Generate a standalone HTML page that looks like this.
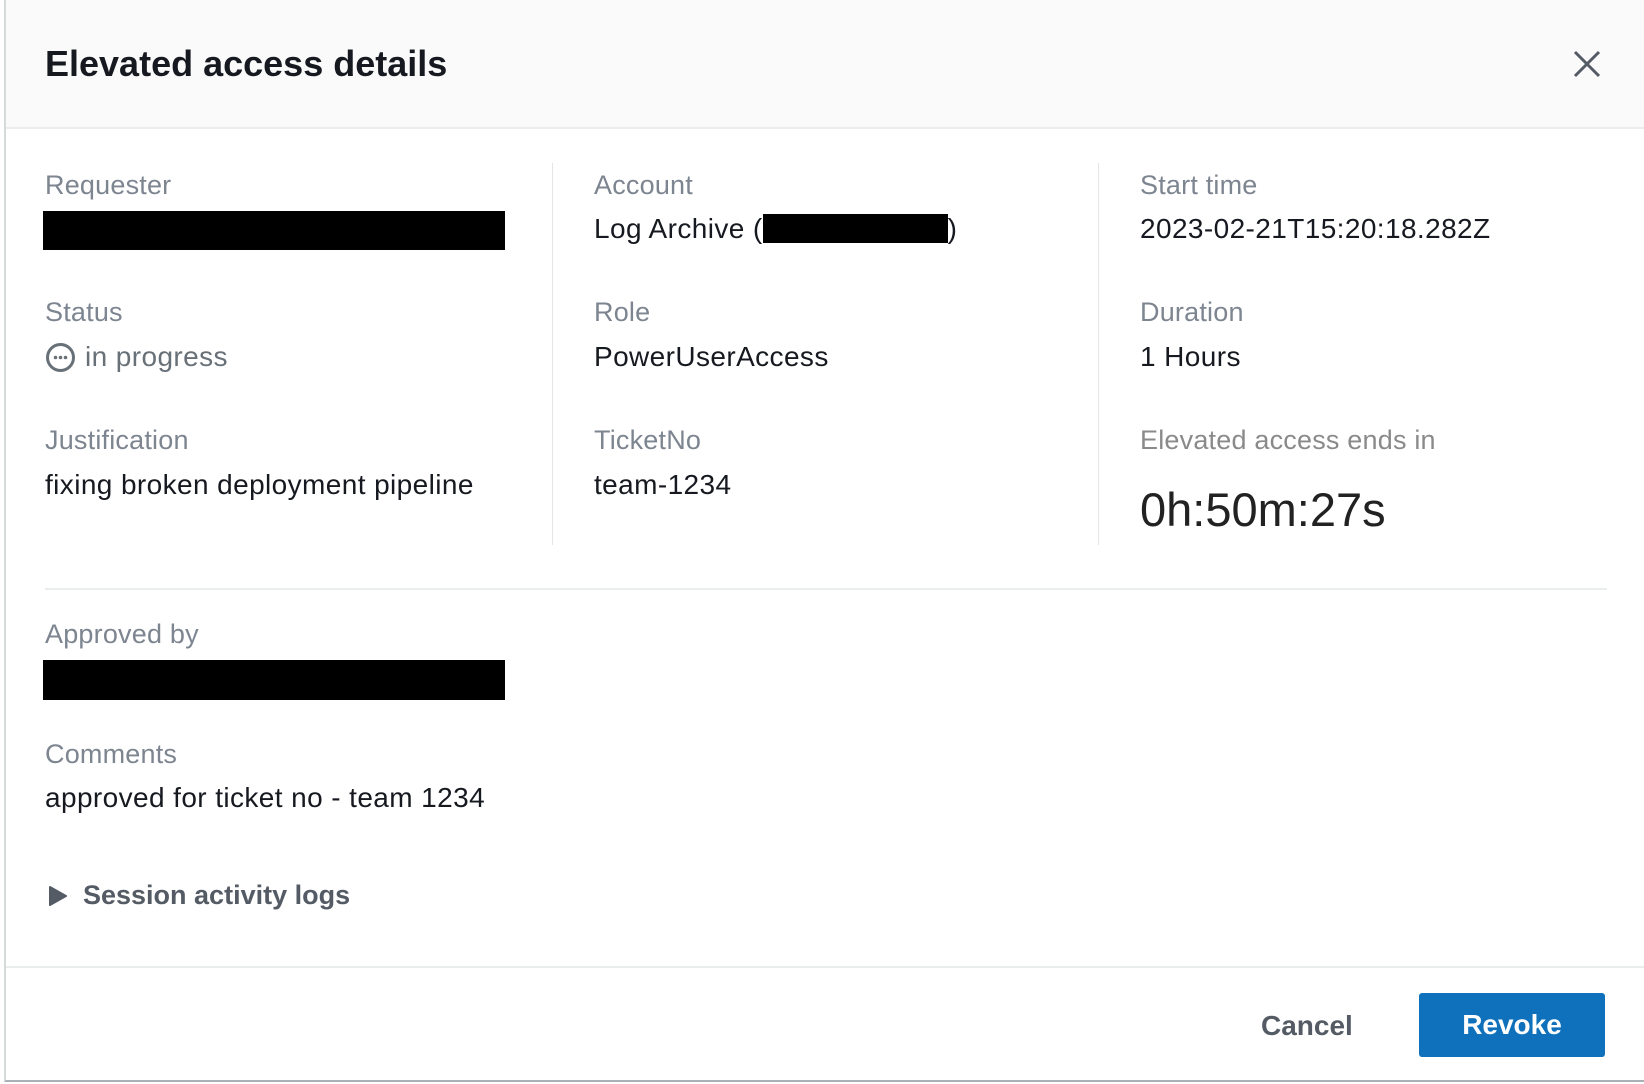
<!DOCTYPE html>
<html><head><meta charset="utf-8"><style>
*{margin:0;padding:0;box-sizing:border-box}
body{width:1644px;height:1084px;background:#fff;font-family:"Liberation Sans",sans-serif;position:relative;overflow:hidden}
.modal{position:absolute;left:4px;top:0;width:1640px;height:1082px;border-left:2px solid #d5dbdb;border-bottom:2px solid #aab0b5;background:#fff}
.hdr{position:absolute;left:0;top:0;right:0;height:129px;background:#fafafa;border-bottom:2px solid #eaeded}
.title{position:absolute;left:39px;top:43px;font-size:36px;font-weight:bold;color:#16191f}
.abs{position:absolute;white-space:nowrap}
.lbl{font-size:27px;color:#7d8590;letter-spacing:0.2px}
.val{font-size:28px;color:#16191f;letter-spacing:0.4px}
.blk{position:absolute;background:#000}
.vdiv{position:absolute;top:163px;height:382px;width:1px;background:#e3e6e9}
</style></head><body>
<div class="modal">
<div class="hdr"><div class="title">Elevated access details</div>
<svg class="abs" style="left:1567px;top:50px" width="28" height="28" viewBox="0 0 28 28"><path d="M2 2L26 26M26 2L2 26" stroke="#545b64" stroke-width="3" fill="none"/></svg>
</div>
<div class="vdiv" style="left:546px"></div>
<div class="vdiv" style="left:1092px"></div>

<div class="abs lbl" style="left:39px;top:170px">Requester</div>
<div class="blk" style="left:37px;top:211px;width:462px;height:39px"></div>
<div class="abs lbl" style="left:39px;top:297px">Status</div>
<svg class="abs" style="left:39px;top:342px" width="31" height="31" viewBox="0 0 31 31"><circle cx="15.5" cy="15.5" r="13" stroke="#687078" stroke-width="3" fill="none"/><circle cx="10.5" cy="15.5" r="1.8" fill="#687078"/><circle cx="15.5" cy="15.5" r="1.8" fill="#687078"/><circle cx="20.5" cy="15.5" r="1.8" fill="#687078"/></svg>
<div class="abs val" style="left:79px;top:341px;color:#687078">in progress</div>
<div class="abs lbl" style="left:39px;top:425px">Justification</div>
<div class="abs val" style="left:39px;top:469px">fixing broken deployment pipeline</div>

<div class="abs lbl" style="left:588px;top:170px">Account</div>
<div class="abs val" style="left:588px;top:213px">Log Archive (<span style="display:inline-block;width:185px;height:29px;background:#000;vertical-align:-5px"></span>)</div>
<div class="abs lbl" style="left:588px;top:297px">Role</div>
<div class="abs val" style="left:588px;top:341px">PowerUserAccess</div>
<div class="abs lbl" style="left:588px;top:425px">TicketNo</div>
<div class="abs val" style="left:588px;top:469px">team-1234</div>

<div class="abs lbl" style="left:1134px;top:170px">Start time</div>
<div class="abs val" style="left:1134px;top:213px">2023-02-21T15:20:18.282Z</div>
<div class="abs lbl" style="left:1134px;top:297px">Duration</div>
<div class="abs val" style="left:1134px;top:341px">1 Hours</div>
<div class="abs lbl" style="left:1134px;top:425px;color:#8a8a8a">Elevated access ends in</div>
<div class="abs" style="left:1134px;top:482px;font-size:47px;color:#222">0h:50m:27s</div>

<div class="abs" style="left:39px;top:588px;width:1562px;height:2px;background:#eaeded"></div>

<div class="abs lbl" style="left:39px;top:619px">Approved by</div>
<div class="blk" style="left:37px;top:660px;width:462px;height:40px"></div>
<div class="abs lbl" style="left:39px;top:739px">Comments</div>
<div class="abs val" style="left:39px;top:782px">approved for ticket no - team 1234</div>

<svg class="abs" style="left:43px;top:886px" width="18" height="20" viewBox="0 0 18 20"><path d="M1 1L17 10L1 19Z" fill="#545b64" stroke="#545b64" stroke-linejoin="round" stroke-width="2"/></svg>
<div class="abs" style="left:77px;top:880px;font-size:27px;font-weight:bold;color:#545b64">Session activity logs</div>

<div class="abs" style="left:0;top:966px;right:0;height:2px;background:#eaeded"></div>
<div class="abs" style="left:1255px;top:1010px;font-size:28px;font-weight:bold;color:#545b64">Cancel</div>
<div class="abs" style="left:1413px;top:993px;width:186px;height:64px;background:#0f71bb;border-radius:3px;color:#fff;font-size:28px;font-weight:bold;text-align:center;line-height:64px">Revoke</div>
</div>
</body></html>
